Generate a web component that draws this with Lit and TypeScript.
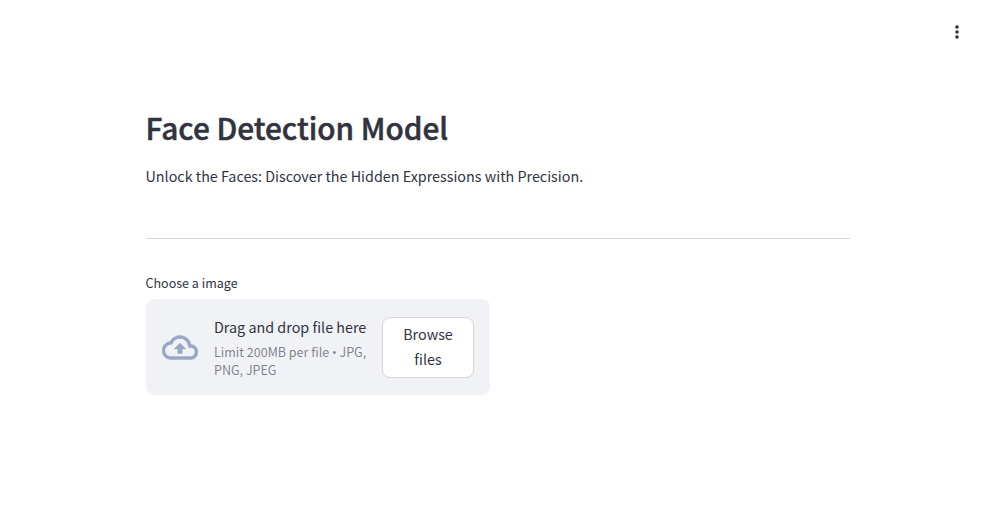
import { LitElement, html, css } from "lit";
import { customElement } from "lit/decorators.js";

@customElement("file-uploader")
class FileUploader extends LitElement {
  static styles = css`
    :host { display: block; width: 344px; }
    .label { font-size: 12.53px; line-height: 22px; height: 27px; margin-left: -0.5px; }
    .drop { display: flex; align-items: center; box-sizing: border-box; height: 96px; padding: 16px; background: #f0f2f6; border-radius: 8px; }
    .cloud { width: 36px; height: 36px; flex: none; margin-right: 16px; color: #97a6c3; }
    .info { flex: 1; white-space: nowrap; }
    .title { font-size: 14.35px; line-height: 25px; margin-bottom: 4px; margin-top: -1px; }
    .limit { font-size: 12.53px; line-height: 18px; color: rgba(49, 51, 63, 0.6); }
    .bullet { font-family: "Open Sans", sans-serif; line-height: 1; }
    button { box-sizing: border-box; width: 92px; height: 61px; padding: 2px 12px 4px; flex: none; border: 1px solid #d6d6d9; border-radius: 8px; background: #fff; color: inherit; font: inherit; font-size: 14.35px; line-height: 25px; }
  `;
  render() {
    return html`
      <div class="label">Choose a image</div>
      <div class="drop">
        <svg class="cloud" viewBox="0 -0.33 24 24" fill="currentColor" stroke="currentColor" stroke-width="0.3"><path d="M19.35 10.04A7.49 7.49 0 0012 4C9.11 4 6.6 5.64 5.35 8.04A5.994 5.994 0 000 14c0 3.31 2.69 6 6 6h13c2.76 0 5-2.24 5-5 0-2.64-2.05-4.78-4.65-4.96zM19 18H6c-2.21 0-4-1.79-4-4 0-2.05 1.53-3.76 3.56-3.97l1.07-.11.5-.95A5.469 5.469 0 0112 6c2.62 0 4.88 1.86 5.39 4.43l.3 1.5 1.53.11A2.98 2.98 0 0122 15c0 1.65-1.35 3-3 3zM8 13h2.55v3h2.9v-3H16l-4-4z"/></svg>
        <div class="info">
          <div class="title">Drag and drop file here</div>
          <div class="limit">Limit 200MB per file <span class="bullet">•</span> JPG,<br>PNG, JPEG</div>
        </div>
        <button>Browse<br>files</button>
      </div>`;
  }
}

@customElement("app-root")
class AppRoot extends LitElement {
  static styles = css`
    :host { display: block; height: 531px; background: #fff; color: #31333f; overflow: hidden; font-family: "Noto Sans CJK SC", "Noto Sans CJK JP", sans-serif; }
    header { display: flex; justify-content: flex-end; align-items: center; height: 64px; padding-right: 28px; }
    .dots { width: 20px; height: 20px; }
    main { width: 704px; margin-left: 146px; }
    h1 { margin: 0 0 0 -0.5px; padding: 39px 0 1px; font-size: 29.75px; line-height: 48px; font-weight: 500; -webkit-text-stroke: 0.5px currentColor; }
    p { margin: 11px 0 0 -0.5px; font-size: 14.33px; line-height: 25px; }
    hr { margin: 50px 0 33px; border: 0; border-top: 1px solid #d6d6d9; }
  `;
  render() {
    return html`
      <header><svg class="dots" viewBox="0 0 24 24" fill="currentColor"><circle cx="12" cy="6" r="2.2"/><circle cx="12" cy="12" r="2.2"/><circle cx="12" cy="18" r="2.2"/></svg></header>
      <main>
        <h1>Face Detection Model</h1>
        <p>Unlock the Faces: Discover the Hidden Expressions with Precision.</p>
        <hr>
        <file-uploader></file-uploader>
      </main>`;
  }
}
